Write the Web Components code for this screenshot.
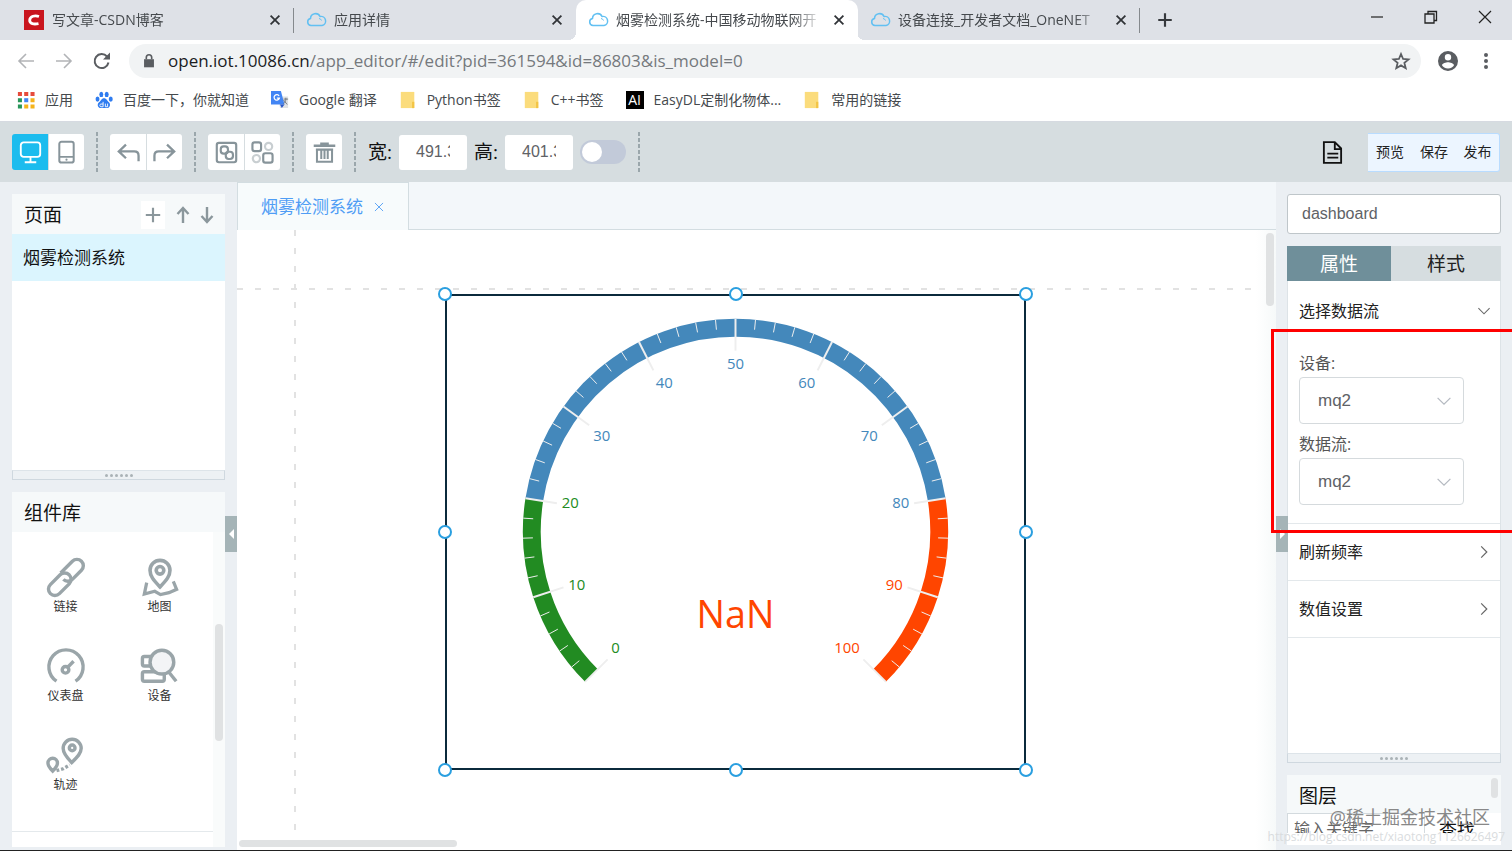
<!DOCTYPE html>
<html lang="zh-CN">
<head>
<meta charset="utf-8">
<title>烟雾检测系统</title>
<style>
  body {
    margin: 0;
    background: #ebeff3;
    color: #111;
    font: 14px/20px "Open Sans", "Noto Sans CJK SC", sans-serif;
  }
</style>
</head>
<body>
<iot-window></iot-window>

<script>
const ICONS = {
  csdn: '<rect width="20" height="20" fill="#c9151e"/><path d="M15 6.500C11 5.200 6 6 5.700 10.200 5.500 14 10 14.500 14.500 13.600" fill="none" stroke="#fff" stroke-width="2.800"/>',
  cloud: '<path d="M5 15.500a3.600 3.600 0 0 1-.5-7.100A5 5 0 0 1 14 6.500a4.600 4.600 0 0 1 2 9z" fill="none" stroke="#62c0f2" stroke-width="1.500"/><path d="M13 8.500a3 3 0 0 1 2.500 2" fill="none" stroke="#62c0f2"/>',
  close: '<path d="M4.500 4.500l11 11m0-11l-11 11" stroke="currentColor" stroke-width="2.200"/>',
  thinClose: '<path d="M5.500 5.500l9 9m0-9l-9 9" stroke="currentColor"/>',
  winClose: '<path d="M4 4l12 12m0-12L4 16" stroke="currentColor" stroke-width="1.200"/>',
  plus: '<path d="M10 2.500v15M2.500 10h15" stroke="currentColor" stroke-width="2.400"/>',
  add: '<path d="M10 2v16M2 10h16" stroke="currentColor" stroke-width="2.400"/>',
  min: '<path d="M4 10h12" stroke="currentColor" stroke-width="1.200"/>',
  restore: '<path d="M4 7h9v9H4zM7 7V4.500h8.500v9H13" fill="none" stroke="currentColor" stroke-width="1.300"/>',
  back: '<path d="M18 10H3.500M10 3l-7 7 7 7" fill="none" stroke="currentColor" stroke-width="1.600"/>',
  forward: '<path d="M2 10h14.500M10 3l7 7-7 7" fill="none" stroke="currentColor" stroke-width="1.600"/>',
  reload: '<path d="M16.500 11.500A7 7 0 1 1 15 5.500" fill="none" stroke="currentColor" stroke-width="2"/><path d="M18 1.500v7h-7z" fill="currentColor"/>',
  lock: '<path d="M4.500 8h11v9h-11z" fill="currentColor"/><path d="M7 8V6a3 3 0 0 1 6 0v2" fill="none" stroke="currentColor" stroke-width="1.800"/>',
  star: '<path d="M10 3l2.100 5 5.400.4-4.100 3.500 1.300 5.300L10 14.400l-4.700 2.800 1.300-5.300L2.500 8.400 7.900 8z" fill="none" stroke="currentColor" stroke-width="1.800"/>',
  user: '<path fill="currentColor" fill-rule="evenodd" d="M10 0a10 10 0 1 0 0 20 10 10 0 0 0 0-20zm0 3a3.200 3.200 0 1 1 0 6.400A3.200 3.200 0 0 1 10 3zm0 14.500c-3 0-5-1.300-6-3.200.2-2 4-3 6-3s5.800 1 6 3c-1 1.900-3 3.200-6 3.200z"/>',
  more: '<g fill="currentColor"><circle cx="10" cy="4" r="2"/><circle cx="10" cy="10" r="2"/><circle cx="10" cy="16" r="2"/></g>',
  apps: '<g fill="#e64b3c"><path d="M1 1h4.500v4.500H1zM8 1h4.500v4.500H8zM15 1h4.500v4.500H15z"/></g><path d="M1 8h4.500v4.500H1zM1 15h4.500v4.500H1z" fill="#28965a"/><path d="M8 8h4.500v4.500H8z" fill="#4285f4"/><path d="M15 8h4.500v4.500H15zM8 15h4.500v4.500H8zM15 15h4.500v4.500H15z" fill="#f5b31b"/>',
  baidu: '<g fill="#2f7cf0"><ellipse cx="2.800" cy="9" rx="2.200" ry="2.900"/><ellipse cx="7" cy="3.800" rx="2.200" ry="3"/><ellipse cx="13" cy="3.800" rx="2.200" ry="3"/><ellipse cx="17.500" cy="9" rx="2.200" ry="2.900"/><path d="M10 8c3 0 3.500 3 5.500 4.500s1.500 6.500-2 6.500c-2 0-5-.3-7 0-4 0-4.300-5-2-6.500S7 8 10 8z"/></g><path d="M9 12v5.500H6.500c-1.500 0-1.500-3 0-3H9M11.500 14v3.500H14V14" fill="none" stroke="#fff"/>',
  translate: '<path d="M8 6h11v13H10z" fill="#dfe1e4"/><path d="M0 0h11l4 15H0z" fill="#4285f4"/><path d="M10 15h5l-3 4z" fill="#2a56c6"/><path d="M9 5.500A3 3 0 1 0 9.300 8H6.500" fill="none" stroke="#fff" stroke-width="1.400"/><path d="M14 9h5m-2.500-1.500V9c0 2-1 3.500-2.500 5m0-4l4 5" fill="none" stroke="#6b7178"/>',
  folder: '<path d="M2 1h15v18H2z" fill="#fbdc7c"/><path d="M17 12h-2.500v7H17z" fill="#f3c445"/>',
  desktop: '<rect x="2.500" y="2" width="27" height="20" rx="4" fill="none" stroke="currentColor" stroke-width="2.600"/><path d="M16 22v7M8 29.500h16" stroke="currentColor" stroke-width="2.600"/>',
  phone: '<rect x="6" y="1" width="20" height="29" rx="3" fill="none" stroke="currentColor" stroke-width="2.800"/><path d="M6 22h20" stroke="currentColor" stroke-width="2.400"/><circle cx="16" cy="26" r="1.500" fill="currentColor"/>',
  undo: '<path d="M12.500 5l-10 9.500 10 9.500M3.500 14.500H24q6 0 6 6V28" fill="none" stroke="currentColor" stroke-width="3.200"/>',
  redo: '<path d="M19.500 5l10 9.500-10 9.500M28.500 14.500H8q-6 0-6 6V28" fill="none" stroke="currentColor" stroke-width="3.200"/>',
  group: '<g fill="none" stroke="currentColor" stroke-width="3"><rect x="2.500" y="2.500" width="27" height="27" rx="3"/><rect x="8" y="7.500" width="10" height="10" rx="4"/><rect x="15" y="15" width="10" height="10" rx="4"/></g>',
  ungroup: '<g fill="none" stroke="currentColor" stroke-width="3"><rect x="2" y="2" width="12" height="12" rx="3"/><rect x="17" y="17" width="13" height="13" rx="3"/><g opacity=".45"><circle cx="24.500" cy="7.500" r="5"/><circle cx="7.500" cy="24.500" r="5"/></g></g>',
  trash: '<path d="M1 6.500h30M10 4h12" stroke="currentColor" stroke-width="3.600"/><path d="M5.500 11v18h21V11M11.500 12v13M16 12v13M20.500 12v13M4 12h24" fill="none" stroke="currentColor" stroke-width="2.800"/>',
  doc: '<path d="M2.500 1h9.500l5.500 5.500V19h-15zM12 1v6h6M5.500 11h9.500M5.500 14.500h9.500" fill="none" stroke="currentColor" stroke-width="1.600"/>',
  up: '<path d="M10 18V3M4.500 9L10 3l5.500 6" fill="none" stroke="currentColor" stroke-width="2.400"/>',
  down: '<path d="M10 2v15M4.500 11l5.500 6 5.500-6" fill="none" stroke="currentColor" stroke-width="2.400"/>',
  chevronDown: '<path d="M2 6l8 8 8-8" fill="none" stroke="currentColor" stroke-width="1.500"/>',
  chevronRight: '<path d="M6 2l8 8-8 8" fill="none" stroke="currentColor" stroke-width="1.700"/>',
  link: '<g fill="none" stroke="currentColor" stroke-width="3.600" transform="rotate(-45 20 20)"><rect x="-4" y="14" width="28" height="13.500" rx="6.700"/><path d="M19 13h17.500a6.700 6.700 0 0 1 0 13.500H23a6.700 6.700 0 0 1-6.700-6.700"/></g>',
  map: '<g fill="none" stroke="currentColor" stroke-width="3.800"><path d="M20 30.500C13 23 9.500 19 9.500 13a10.500 10.500 0 0 1 21 0c0 6-3.500 10-10.500 17.500z"/><circle cx="20" cy="13" r="4"/><path d="M6 26L3.500 38l11-3 6 3.500 9-2 8-3.500-3.500-8.500" stroke-width="3.400"/></g>',
  gauge: '<g fill="none" stroke="currentColor" stroke-width="3.600"><path d="M10 36a18 18 0 1 1 20 0"/><circle cx="19.500" cy="24" r="3.500"/><path d="M22 21l6-6"/></g>',
  device: '<g fill="none" stroke="currentColor" stroke-width="3.600"><rect x="1.500" y="10" width="10" height="10" rx="2"/><rect x="1.500" y="26" width="23" height="10" rx="2"/><circle cx="22" cy="16" r="12.500" fill="#f3f4f6"/><path d="M29 26l8 10"/></g>',
  track: '<g fill="none" stroke="currentColor" stroke-width="3.600"><path d="M26 28c-6-6-9-10-9-15a9.500 9.500 0 0 1 19 0c0 5-4 9-10 15z"/><circle cx="26.500" cy="12.500" r="3"/><path d="M6 37c-4-4-5-6-5-8.500a5 5 0 0 1 10 0C11 31 9 34 6 37z"/><path d="M10 36.500l7-2 7-4" stroke-dasharray="3 2"/></g>',
}

// Icon grids: browser glyphs 20, toolbar glyphs 32, library glyphs 40
const GRID = {
  desktop: 32, phone: 32, undo: 32, redo: 32, group: 32, ungroup: 32, trash: 32,
  link: 40, map: 40, gauge: 40, device: 40, track: 40,
}

function define(name, html, setup) {
  const template = Object.assign(document.createElement('template'), {innerHTML: html})

  window.customElements.define(name, class extends HTMLElement {
    constructor() {
      super()
      this.attachShadow({mode: 'open'})
      this.shadowRoot.appendChild(document.importNode(template.content, true))
    }

    connectedCallback() {
      if (setup) setup(this, this.shadowRoot)
    }
  })
}

define('iot-icon', `
  <style>
    :host { display: inline-block; flex: none; width: 20px; height: 20px; }
    svg { display: block; width: 100%; height: 100%; overflow: visible; }
  </style>
  <svg aria-hidden="true"></svg>
`, (host, root) => {
  const name = host.getAttribute('name')
  const size = GRID[name] || 20
  const svg = root.querySelector('svg')
  svg.setAttribute('viewBox', `0 0 ${size} ${size}`)
  svg.innerHTML = ICONS[name]
})

/* ---- browser ---- */

define('browser-tab', `
  <style>
    :host {
      display: flex;
      position: relative;
      flex: 0 1 282px;
      min-width: 0;
      box-sizing: border-box;
      height: 40px;
      padding: 0 10px 0 12px;
      align-items: center;
      gap: 8px;
      color: #45494d;
      border-right: 1px solid transparent;
    }
    :host([divider]) {
      border-image: linear-gradient(transparent 9px, #85898d 9px, #85898d 32px, transparent 32px) 1;
    }
    :host([active]) {
      background: #fff;
      border-radius: 10px 10px 0 0;
    }
    :host([active])::before, :host([active])::after {
      content: "";
      position: absolute;
      bottom: 0;
      width: 8px;
      height: 8px;
    }
    :host([active])::before { right: 100%; background: radial-gradient(circle at 0 0, transparent 8px, #fff 8px); }
    :host([active])::after { left: 100%; background: radial-gradient(circle at 100% 0, transparent 8px, #fff 8px); }
    span {
      flex: 1;
      overflow: hidden;
      white-space: nowrap;
      -webkit-mask-image: linear-gradient(90deg, #000 85%, transparent);
    }
    button { display: flex; border: 0; padding: 0; background: none; color: #303337; }
    .close { width: 16px; height: 16px; }
  </style>
  <iot-icon></iot-icon>
  <span><slot></slot></span>
  <button aria-label="关闭标签页"><iot-icon class="close" name="close"></iot-icon></button>
`, (host, root) => {
  const icon = document.createElement('iot-icon')
  icon.setAttribute('name', host.getAttribute('icon'))
  root.querySelector('iot-icon').replaceWith(icon)
})

define('bookmark-link', `
  <style>
    :host { display: block; }
    a { display: flex; align-items: center; gap: 10px; color: #45494d; text-decoration: none; white-space: nowrap; }
    .icon { display: flex; }
    ::slotted(iot-icon) { width: 18px; height: 18px; }
    ::slotted(b) { width: 18px; background: #000; color: #fff; font: 14px/18px "Open Sans", sans-serif; text-align: center; }
  </style>
  <a href="#"><span class="icon"><slot name="icon"></slot></span><slot></slot></a>
`)

define('browser-chrome', `
  <style>
    :host { display: block; background: #fff; border-bottom: 1px solid #d6dae1; }
    button { display: flex; align-items: center; justify-content: center; border: 0; padding: 0; background: none; color: #5a5d61; }
    .tabs { display: flex; height: 40px; padding-left: 12px; background: #dee1e7; }
    .new { width: 50px; color: #36393d; }
    .new iot-icon { width: 18px; height: 18px; }
    .window { display: flex; margin-left: auto; height: 34px; }
    .window button { width: 54px; color: #222; }
    .nav { display: flex; height: 42px; padding: 0 7px; align-items: center; }
    .nav button { width: 38px; height: 34px; }
    .nav button[disabled] { color: #b2b4b7; }
    .address {
      display: flex; flex: 1; align-items: center; gap: 10px; height: 34px; margin: 0 8px; padding: 0 10px 0 11px;
      border-radius: 17px; background: #f1f3f4; color: #5a5d61;
    }
    .url { flex: 1; font-size: 17px; line-height: 24px; color: #75797d; white-space: nowrap; }
    .url b { font-weight: 400; color: #1b1c1e; }
    .lock { width: 18px; height: 18px; }
    .address button { width: 20px; }
    .bookmarks { display: flex; height: 36px; padding: 0 17px 3px; align-items: center; gap: 22px; }
  </style>
  <div class="tabs">
    <browser-tab icon="csdn" divider>写文章-CSDN博客</browser-tab>
    <browser-tab icon="cloud">应用详情</browser-tab>
    <browser-tab icon="cloud" active>烟雾检测系统-中国移动物联网开</browser-tab>
    <browser-tab icon="cloud" divider>设备连接_开发者文档_OneNET</browser-tab>
    <button class="new" aria-label="新标签页"><iot-icon name="plus"></iot-icon></button>
    <div class="window">
      <button aria-label="最小化"><iot-icon name="min"></iot-icon></button>
      <button aria-label="还原"><iot-icon name="restore"></iot-icon></button>
      <button aria-label="关闭"><iot-icon name="winClose"></iot-icon></button>
    </div>
  </div>
  <div class="nav">
    <button disabled aria-label="后退"><iot-icon name="back"></iot-icon></button>
    <button disabled aria-label="前进"><iot-icon name="forward"></iot-icon></button>
    <button aria-label="刷新"><iot-icon name="reload"></iot-icon></button>
    <div class="address">
      <iot-icon class="lock" name="lock"></iot-icon>
      <div class="url" role="textbox" aria-label="地址"><b>open.iot.10086.cn</b>/app_editor/#/edit?pid=361594&amp;id=86803&amp;is_model=0</div>
      <button aria-label="收藏"><iot-icon name="star"></iot-icon></button>
    </div>
    <button aria-label="用户"><iot-icon name="user"></iot-icon></button>
    <button aria-label="菜单"><iot-icon name="more"></iot-icon></button>
  </div>
  <div class="bookmarks">
    <bookmark-link><iot-icon slot="icon" name="apps"></iot-icon>应用</bookmark-link>
    <bookmark-link><iot-icon slot="icon" name="baidu"></iot-icon>百度一下，你就知道</bookmark-link>
    <bookmark-link><iot-icon slot="icon" name="translate"></iot-icon>Google 翻译</bookmark-link>
    <bookmark-link><iot-icon slot="icon" name="folder"></iot-icon>Python书签</bookmark-link>
    <bookmark-link><iot-icon slot="icon" name="folder"></iot-icon>C++书签</bookmark-link>
    <bookmark-link><b slot="icon">AI</b>EasyDL定制化物体...</bookmark-link>
    <bookmark-link><iot-icon slot="icon" name="folder"></iot-icon>常用的链接</bookmark-link>
  </div>
`)

/* ---- editor toolbar ---- */

define('tool-group', `
  <style>
    :host { display: flex; border-radius: 3px; overflow: hidden; }
    ::slotted(button) {
      display: flex; width: 36px; height: 36px; padding: 0; border: 0;
      align-items: center; justify-content: center; background: #fff; color: #87949a;
    }
    ::slotted(button:not(:first-child)) { border-left: 1px solid #d6dde0; }
    ::slotted(button[aria-pressed="true"]) { background: #1cbcee; color: #fff; }
  </style>
  <slot></slot>
`)

define('editor-toolbar', `
  <style>
    :host { display: flex; height: 60px; padding: 0 12px; align-items: center; gap: 12px; background: #d6dde0; }
    tool-group iot-icon { width: 23px; height: 23px; }
    hr { flex: none; width: 2px; height: 40px; margin: 0; border: 0; background: repeating-linear-gradient(#9aa6ab 0 4px, transparent 4px 6px); }
    .size { display: flex; align-items: center; gap: 7px; }
    label { font-size: 19px; line-height: 28px; }
    .size input {
      box-sizing: border-box; width: 68px; height: 35px; padding: 0 17px; border: 0; border-radius: 3px;
      background: #fff; color: #606266; font: 16px "Liberation Sans", sans-serif;
    }
    .size .switch {
      appearance: none; display: flex; width: 46px; height: 24px; margin: 0; padding: 2px; border-radius: 12px; background: #c2cad9;
    }
    .switch::before { content: ""; width: 20px; height: 20px; border-radius: 50%; background: #fff; }
    .doc { display: flex; margin: 0 12px 0 auto; padding: 0; border: 0; background: none; color: #111; }
    .doc iot-icon { width: 23px; height: 23px; }
    .actions { display: flex; }
    .actions button {
      box-sizing: border-box; width: 44px; height: 39px; padding: 0; border: 1px solid #b9dcff; border-width: 1px 0;
      background: #ecf5ff; color: #222; font: inherit; font-size: 14px;
    }
    .actions button:last-child { border-right-width: 1px; border-radius: 0 3px 3px 0; }
  </style>
  <tool-group>
    <button aria-label="桌面" aria-pressed="true"><iot-icon name="desktop"></iot-icon></button>
    <button aria-label="手机"><iot-icon name="phone"></iot-icon></button>
  </tool-group>
  <hr>
  <tool-group>
    <button aria-label="撤销"><iot-icon name="undo"></iot-icon></button>
    <button aria-label="重做"><iot-icon name="redo"></iot-icon></button>
  </tool-group>
  <hr>
  <tool-group>
    <button aria-label="组合"><iot-icon name="group"></iot-icon></button>
    <button aria-label="取消组合"><iot-icon name="ungroup"></iot-icon></button>
  </tool-group>
  <hr>
  <tool-group>
    <button aria-label="删除"><iot-icon name="trash"></iot-icon></button>
  </tool-group>
  <hr>
  <div class="size">
    <label for="w">宽:</label>
    <input id="w" value="491.33">
    <label for="h">高:</label>
    <input id="h" value="401.33">
    <input class="switch" type="checkbox" role="switch" aria-label="锁定比例">
  </div>
  <hr>
  <button class="doc" aria-label="文档"><iot-icon name="doc"></iot-icon></button>
  <div class="actions"><button>预览</button><button>保存</button><button>发布</button></div>
`)

/* ---- shared panel parts ---- */

define('resize-grip', `
  <style>
    :host {
      display: flex; flex: none; box-sizing: border-box; height: 10px; align-items: center; justify-content: center; gap: 2px;
      border: 1px solid #cfd8df; border-top-color: #dde4e9; background: #edf1f4;
    }
    i { width: 3px; height: 3px; border-radius: 50%; background: #aab2b6; }
  </style>
  <i></i><i></i><i></i><i></i><i></i><i></i>
`)

// Sits in the gutter between a sidebar and the canvas
define('collapse-handle', `
  <style>
    :host { position: absolute; top: 50%; width: 12px; height: 36px; background: #a5b4b7; }
    button { display: flex; width: 100%; height: 100%; padding: 0; border: 0; align-items: center; justify-content: center; background: none; }
    i { border: 5px solid transparent; border-left-width: 0; border-right-color: #fff; }
    :host([right]) i { border-width: 5px 0 5px 5px; border-color: transparent transparent transparent #fff; }
  </style>
  <button aria-label="收起"><i></i></button>
`)

define('library-item', `
  <style>
    :host { display: flex; flex-direction: column; height: 89px; align-items: center; gap: 2px; font-size: 12px; line-height: 18px; color: #333; }
    ::slotted(iot-icon) { width: 38px; height: 38px; color: #9aa5a9; }
  </style>
  <slot name="icon"></slot>
  <slot></slot>
`)

define('editor-sidebar', `
  <style>
    :host { display: flex; flex-direction: column; position: relative; box-sizing: border-box; width: 237px; padding: 12px 12px 3px; }
    h2 { margin: 0; font-size: 19px; line-height: 28px; font-weight: 400; }
    header { display: flex; flex: none; box-sizing: border-box; height: 40px; padding: 2px 6px 0 12px; align-items: center; background: #f6f9fa; }
    header button { display: flex; width: 24px; height: 28px; padding: 0; border: 0; align-items: center; justify-content: center; background: none; color: #8b979c; }
    .add { margin: 0 6px 0 auto; background: #fff; }
    .add iot-icon { width: 18px; height: 18px; }
    .pages { height: 276px; background: #fff; }
    .page { display: block; padding: 0 11px; background: #dbf5fe; color: #111; font-size: 17px; line-height: 47px; text-decoration: none; }
    .library { display: flex; flex: 1; flex-direction: column; min-height: 0; margin-top: 12px; }
    .body { display: flex; flex: 1; min-height: 0; background: #fff; }
    .grid {
      display: grid; flex: 1; grid-template-columns: 94px 94px; align-content: start; justify-content: center;
      box-sizing: border-box; height: 300px; padding-top: 26px; border-bottom: 1px solid #e4e9ec;
    }
    .track { width: 12px; padding-top: 92px; background: #f9fbfb; }
    .thumb { width: 8px; height: 117px; margin: 0 auto; border-radius: 4px; background: #e0e2e3; }
    collapse-handle { right: 0; }
  </style>
  <section class="pages">
    <header>
      <h2>页面</h2>
      <button class="add" aria-label="添加"><iot-icon name="add"></iot-icon></button>
      <button aria-label="上移"><iot-icon name="up"></iot-icon></button>
      <button aria-label="下移"><iot-icon name="down"></iot-icon></button>
    </header>
    <a class="page" href="#">烟雾检测系统</a>
  </section>
  <resize-grip></resize-grip>
  <section class="library">
    <header><h2>组件库</h2></header>
    <div class="body">
      <div class="grid">
        <library-item><iot-icon slot="icon" name="link"></iot-icon>链接</library-item>
        <library-item><iot-icon slot="icon" name="map"></iot-icon>地图</library-item>
        <library-item><iot-icon slot="icon" name="gauge"></iot-icon>仪表盘</library-item>
        <library-item><iot-icon slot="icon" name="device"></iot-icon>设备</library-item>
        <library-item><iot-icon slot="icon" name="track"></iot-icon>轨迹</library-item>
      </div>
      <div class="track"><div class="thumb"></div></div>
    </div>
  </section>
  <collapse-handle></collapse-handle>
`)

/* ---- canvas ---- */

const BANDS = [[0, 20, '#228b22'], [20, 80, '#4488bb'], [80, 100, '#ff4500']]
const RADIUS = 214
const BAND_WIDTH = 18
const TICK = 32

// 0 sits at 225 degrees, 100 at -45 degrees
function polar(value, radius) {
  const angle = (225 - 2.7 * value) * Math.PI / 180
  return [radius * Math.cos(angle), -radius * Math.sin(angle)]
}

define('gauge-dial', `
  <style>
    :host { display: block; }
    svg { display: block; width: 100%; height: 100%; }
    text { font-size: 15px; }
    .value { font-size: 38px; fill: #ff4500; text-anchor: middle; }
  </style>
  <svg viewBox="-290 -237 580 475">
    <g class="dial"></g>
    <text class="value" y="97"></text>
  </svg>
`, (host, root) => {
  const middle = RADIUS - BAND_WIDTH / 2
  let out = ''

  BANDS.forEach(([from, to, color]) => {
    const large = to - from > 66 ? 1 : 0
    out += `<path d="M${polar(from, middle)}A${middle} ${middle} 0 ${large} 1 ${polar(to, middle)}" fill="none" stroke="${color}" stroke-width="${BAND_WIDTH}"/>`
  })

  for (let value = 0; value <= 100; value += 2) {
    const major = value % 10 === 0
    const [x1, y1] = polar(value, RADIUS)
    const [x2, y2] = polar(value, RADIUS - (major ? TICK : 10))
    out += `<line x1="${x1}" y1="${y1}" x2="${x2}" y2="${y2}" stroke="#eee" stroke-width="${major ? 2 : 1}"/>`

    if (major) {
      // the label hangs off the inner end of its tick
      const [cos, sin] = polar(value, 1)
      const [x, y] = polar(value, RADIUS - TICK - 5)
      const anchor = cos < -0.4 ? 'start' : cos > 0.4 ? 'end' : 'middle'
      const drop = sin < -0.4 ? 13 : sin > 0.4 ? -3 : 4
      const band = BANDS.find(b => value <= b[1])
      out += `<text x="${x}" y="${y + drop}" text-anchor="${anchor}" fill="${band[2]}">${value}</text>`
    }
  }

  root.querySelector('.dial').innerHTML = out
  root.querySelector('.value').textContent = host.getAttribute('value')
})

define('selection-frame', `
  <style>
    :host { display: block; position: absolute; box-sizing: border-box; border: 2px solid #0b2a3c; }
    .knobs { position: absolute; inset: -2px; }
    i {
      position: absolute; box-sizing: border-box; width: 14px; height: 14px; margin: -7px;
      border: 2px solid #2a9fe0; border-radius: 50%; background: #fff;
    }
  </style>
  <slot></slot>
  <div class="knobs"></div>
`, (host, root) => {
  for (const y of [0, 50, 100]) {
    for (const x of [0, 50, 100]) {
      if (x === 50 && y === 50) continue
      const knob = document.createElement('i')
      knob.style.left = x + '%'
      knob.style.top = y + '%'
      root.querySelector('.knobs').appendChild(knob)
    }
  }
})

define('editor-canvas', `
  <style>
    :host { display: flex; flex: 1; flex-direction: column; min-width: 0; }
    nav { display: flex; box-sizing: border-box; height: 48px; border-bottom: 1px solid #d3dde1; background: #f3f7fa; }
    .tab {
      display: flex; box-sizing: border-box; height: 48px; padding: 0 20px 0 23px; align-items: center; gap: 7px;
      border: 1px solid #d3dde1; border-width: 1px 1px 0; background: #f7fbfc; color: #4f9df5; font-size: 17px; line-height: 24px;
    }
    .tab button { display: flex; padding: 0; border: 0; background: none; color: inherit; }
    .tab iot-icon { width: 18px; height: 18px; }
    .stage { flex: 1; position: relative; overflow: hidden; background: linear-gradient(270deg, #f6f9f9, #fff 20px); }
    .guide { position: absolute; }
    .h { left: 0; right: 24px; top: 58px; height: 2px; background: repeating-linear-gradient(90deg, #e2e2e2 0 6px, transparent 6px 18px); }
    .v { top: 0; bottom: 12px; left: 57px; width: 2px; background: repeating-linear-gradient(#e2e2e2 0 6px, transparent 6px 18px); }
    selection-frame { left: 208px; top: 64px; width: 581px; height: 476px; }
    gauge-dial { height: 100%; }
    .bar { position: absolute; border-radius: 4px; background: #e0e2e3; }
    .bar.y { right: 2px; top: 3px; width: 8px; height: 73px; }
    .bar.x { left: 2px; bottom: 3px; width: 218px; height: 7px; }
  </style>
  <nav><div class="tab">烟雾检测系统<button aria-label="关闭"><iot-icon name="thinClose"></iot-icon></button></div></nav>
  <div class="stage">
    <div class="guide h"></div>
    <div class="guide v"></div>
    <selection-frame><gauge-dial value="NaN"></gauge-dial></selection-frame>
    <div class="bar y"></div>
    <div class="bar x"></div>
  </div>
`)

/* ---- properties ---- */

define('select-field', `
  <style>
    :host { display: block; color: #555; }
    label { display: block; margin-bottom: 2px; font-size: 16px; line-height: 24px; }
    .box { display: grid; width: 165px; align-items: center; }
    select, iot-icon { grid-area: 1 / 1; }
    select {
      appearance: none; box-sizing: border-box; width: 100%; height: 47px; padding: 0 18px; border: 1px solid #d5dadd;
      border-radius: 4px; background: #fff; color: #606266; font: 17px "Liberation Sans", sans-serif;
    }
    iot-icon { width: 16px; height: 16px; justify-self: end; margin-right: 12px; color: #b4b9c0; }
  </style>
  <label for="field"></label>
  <div class="box">
    <select id="field"><option></option></select>
    <iot-icon name="chevronDown"></iot-icon>
  </div>
`, (host, root) => {
  root.querySelector('label').textContent = host.getAttribute('label')
  root.querySelector('option').textContent = host.getAttribute('value')
})

define('property-section', `
  <style>
    :host { display: block; border-bottom: 1px solid #e3e8eb; }
    button {
      display: flex; width: 100%; height: 56px; padding: 0 9px 0 11px; border: 0; align-items: center; justify-content: space-between;
      background: none; color: #222; font: inherit; font-size: 16px;
    }
    iot-icon { width: 14px; height: 14px; color: #666; }
    .body { display: none; flex-direction: column; gap: 8px; padding: 12px 11px 18px; }
    :host([open]) .body { display: flex; }
  </style>
  <button><span></span></button>
  <div class="body"><slot></slot></div>
`, (host, root) => {
  const icon = document.createElement('iot-icon')
  icon.setAttribute('name', host.hasAttribute('open') ? 'chevronDown' : 'chevronRight')
  root.querySelector('span').textContent = host.getAttribute('label')
  root.querySelector('button').appendChild(icon)
})

define('editor-properties', `
  <style>
    :host { display: flex; flex-direction: column; position: relative; box-sizing: border-box; width: 236px; padding: 12px 11px 5px; }
    .name {
      box-sizing: border-box; width: 100%; height: 40px; padding: 0 14px; border: 1px solid #bfc6ca; border-radius: 3px;
      background: #fff; color: #606266; font: 16px "Liberation Sans", sans-serif;
    }
    .tabs { display: grid; grid-template-columns: 104px 1fr; margin-top: 12px; }
    .tabs button { height: 35px; padding: 0; border: 0; background: #d6dde0; color: #222; font: inherit; font-size: 19px; }
    .tabs [aria-selected="true"] { background: #6f8f9a; color: #fff; }
    .sections { box-sizing: border-box; height: 472px; padding-top: 2px; border: 1px solid #dde3e7; border-width: 0 1px; background: #fff; }
    .layers { display: flex; flex: 1; flex-direction: column; min-height: 0; margin-top: 12px; overflow: hidden; background: #fff; }
    header { display: flex; flex: none; height: 38px; padding: 0 3px 0 12px; justify-content: space-between; background: #f6f9fa; }
    h2 { margin: 0; font-size: 19px; line-height: 42px; font-weight: 400; }
    .thumb { width: 7px; height: 20px; margin-top: 3px; border-radius: 4px; background: #e0e2e3; }
    .search { display: flex; flex: none; height: 20px; align-items: flex-start; overflow: hidden; }
    .search input {
      box-sizing: border-box; width: 138px; height: 32px; padding: 0 6px; border: 1px solid #d3dade;
      background: #fff; color: #606266; font: inherit; font-size: 16px;
    }
    .search input::placeholder { color: #666; }
    .search button { height: 34px; padding: 0 14px; border: 0; background: none; color: #111; font: inherit; font-size: 18px; }
    collapse-handle { left: 0; }
    .mark { position: absolute; top: 147px; left: -5px; right: 0; height: 204px; box-sizing: border-box; border: 3px solid #f00; border-right: 0; }
    .stamp, .source { position: absolute; right: 22px; white-space: nowrap; }
    .stamp { bottom: 20px; font-size: 18px; line-height: 26px; color: #888; }
    .source { right: 7px; bottom: 4px; color: #d9dcde; font-size: 12px; line-height: 18px; }
  </style>
  <input class="name" value="dashboard" aria-label="名称">
  <div class="tabs" role="tablist">
    <button role="tab" aria-selected="true">属性</button>
    <button role="tab" aria-selected="false">样式</button>
  </div>
  <div class="sections">
    <property-section label="选择数据流" open>
      <select-field label="设备:" value="mq2"></select-field>
      <select-field label="数据流:" value="mq2"></select-field>
    </property-section>
    <property-section label="刷新频率"></property-section>
    <property-section label="数值设置"></property-section>
  </div>
  <resize-grip></resize-grip>
  <section class="layers">
    <header><h2>图层</h2><div class="thumb"></div></header>
    <div class="search"><input placeholder="输入关键字" aria-label="关键字"><button>查找</button></div>
  </section>
  <collapse-handle right></collapse-handle>
  <div class="mark"></div>
  <div class="source">https://blog.csdn.net/xiaotong1126626497</div>
  <div class="stamp">@稀土掘金技术社区</div>
`)

define('iot-window', `
  <style>
    :host { display: flex; flex-direction: column; box-sizing: border-box; height: 100vh; border-bottom: 1px solid #222; overflow: hidden; }
    browser-chrome, editor-toolbar { flex: none; }
    main { display: flex; flex: 1; min-height: 0; }
  </style>
  <browser-chrome></browser-chrome>
  <editor-toolbar></editor-toolbar>
  <main>
    <editor-sidebar></editor-sidebar>
    <editor-canvas></editor-canvas>
    <editor-properties></editor-properties>
  </main>
`)
</script>
</body>
</html>
